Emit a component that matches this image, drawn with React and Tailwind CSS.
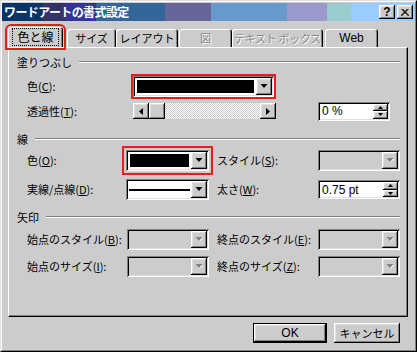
import React from 'react';

const RAISED = 'shadow-[inset_-1px_-1px_#000,inset_1px_1px_#fff,inset_-2px_-2px_#808080,inset_2px_2px_#dfdfdf]';
const SUNKEN = 'shadow-[inset_1px_1px_#808080,inset_-1px_-1px_#fff,inset_2px_2px_#000,inset_-2px_-2px_#dfdfdf]';
const TAB = 'shadow-[inset_1px_1px_#fff,inset_-1px_0_#000,inset_-2px_0_#808080]';

const Down = ({ disabled }) => (
  <svg width="8" height="5" viewBox="0 0 8 5">
    {disabled && <polygon points="1.5,1 8,1 4.75,4.5" fill="#fff" />}
    <polygon points="0.5,0 7.5,0 4,4" fill={disabled ? '#808080' : '#000'} />
  </svg>
);

const DropBtn = ({ disabled }) => (
  <div className={`w-[16px] h-full bg-[#cccccc] flex items-center justify-center ${RAISED}`}>
    <Down disabled={disabled} />
  </div>
);

const Combo = ({ children, disabled, className = '' }) => (
  <div className={`h-[21px] p-[2px] flex ${SUNKEN} ${disabled ? 'bg-[#cccccc]' : 'bg-white'} ${className}`}>
    <div className="flex-1 flex items-center">{children}</div>
    <DropBtn disabled={disabled} />
  </div>
);

const SpinBtn = ({ up }) => (
  <div className={`flex-1 bg-[#cccccc] flex items-center justify-center ${RAISED}`}>
    <svg width="5" height="3" viewBox="0 0 5 3">
      <polygon points={up ? '0,3 5,3 2.5,0' : '0,0 5,0 2.5,3'} fill="#000" />
    </svg>
  </div>
);

const Spin = ({ value, className = '' }) => (
  <div className={`h-[19px] p-[2px] flex bg-white ${SUNKEN} ${className}`}>
    <div className="flex-1 flex items-center pl-[2px] text-[12px] font-['Liberation_Sans',sans-serif]">{value}</div>
    <div className="w-[15px] flex flex-col">
      <SpinBtn up />
      <SpinBtn />
    </div>
  </div>
);

const Section = ({ label, className = '' }) => (
  <div className={`h-[14px] flex items-center pl-[8px] pr-[6px] ${className}`}>
    <span>{label}</span>
    <div className="flex-1 ml-[7px] h-[2px] border-t border-[#808080] border-b border-b-white" />
  </div>
);

const Label = ({ text, k, className = '' }) => (
  <span className={`shrink-0 ${className}`}>
    {text}(<u>{k}</u>):
  </span>
);

const Tab = ({ children, w, disabled, selected, className = '' }) => (
  <div
    className={`${w} ${selected ? 'h-[20px] relative z-10 outline-2 outline-offset-[1px] outline-[#e02020]' : 'h-[18px]'} shrink-0 bg-[#cccccc] rounded-t-[3px] flex items-center justify-center ${TAB} ${disabled ? 'text-[#8a8a8a] [text-shadow:1px_1px_#fff]' : ''} ${className}`}
  >
    {children}
  </div>
);

export default function App() {
  return (
    <div className="w-[417px] h-[352px] bg-[#cccccc] border border-t-[#dfdfdf] border-l-[#dfdfdf] border-r-black border-b-black font-['Noto_Sans_CJK_JP',sans-serif] text-[11px] text-black leading-none whitespace-nowrap select-none">
      <div className="h-full border border-t-white border-l-white border-r-[#808080] border-b-[#808080] flex flex-col pt-[1px]">
        {/* title bar */}
        <div className="h-[18px] relative flex items-center">
          <div className="absolute inset-0 flex">
            <div className="w-[40px] bg-[#0a3366]" />
            <div className="w-[23px] bg-[#333366]" />
            <div className="w-[31px] bg-[#333399]" />
            <div className="w-[69px] bg-[#336699]" />
            <div className="w-[46px] bg-[#666699]" />
            <div className="w-[76px] bg-[#6699cc]" />
            <div className="w-[40px] bg-[#9999cc]" />
            <div className="w-[24px] bg-[#99cccc]" />
            <div className="flex-1 bg-[#99ccff]" />
          </div>
          <span className="relative pl-[2px] text-white font-bold text-[12px] tracking-[-0.6px]">ワードアートの書式設定</span>
          <div className="relative ml-auto flex gap-[2px] pr-[2px]">
            <div className={`w-[16px] h-[14px] bg-[#cccccc] flex items-center justify-center font-bold text-[12px] font-['Liberation_Sans',sans-serif] ${RAISED}`}>?</div>
            <div className={`w-[16px] h-[14px] bg-[#cccccc] flex items-center justify-center ${RAISED}`}>
              <svg width="8" height="7" viewBox="0 0 8 7">
                <path d="M0.5 0 L7.5 7 M1.5 0 L8.5 7 M7.5 0 L0.5 7 M6.5 0 L-0.5 7" stroke="#000" strokeWidth="1" />
              </svg>
            </div>
          </div>
        </div>

        <div className="px-[6px] flex flex-col">
          {/* tabs */}
          <div className="mt-[6px] h-[20px] flex items-end">
            <Tab w="w-[55px]" selected>
              <span className="border border-dotted border-black px-[4px] py-[2px] text-[12px]">色と線</span>
            </Tab>
            <Tab w="w-[49px]" className="ml-[4px]">サイズ</Tab>
            <Tab w="w-[62px]">レイアウト</Tab>
            <Tab w="w-[53px]" className="ml-[1px]" disabled>
              <span className="text-[11px]">図</span>
            </Tab>
            <Tab w="w-[91px]" className="tracking-[-0.3px]" disabled>テキスト ボックス</Tab>
            <Tab w="w-[53px]" className="ml-[2px] text-[12px] font-['Liberation_Sans',sans-serif]">Web</Tab>
          </div>

          {/* panel */}
          <div className="w-[400px] h-[270px] border border-t-white border-l-white border-r-black border-b-black">
            <div className="h-full border-r border-b border-[#808080] flex flex-col pt-[7px]">
              <Section label="塗りつぶし" />

              <div className="mt-[7px] h-[21px] flex items-center pl-[18px]">
                <Label text="色" k="C" className="w-[106px]" />
                <Combo className="w-[141px] outline-2 outline-[#e02020]">
                  <div className="w-full h-full border-2 border-white bg-black" />
                </Combo>
              </div>

              <div className="mt-[6px] h-[16px] flex items-center pl-[18px]">
                <Label text="透過性" k="T" className="w-[106px]" />
                <div className="w-[143px] h-[16px] flex">
                  <div className={`w-[16px] bg-[#cccccc] flex items-center justify-center ${RAISED}`}>
                    <svg width="4" height="7" viewBox="0 0 4 7"><polygon points="4,0 4,7 0,3.5" fill="#000" /></svg>
                  </div>
                  <div className={`w-[16px] bg-[#cccccc] ${RAISED}`} />
                  <div className="flex-1 bg-[image:repeating-conic-gradient(#ffffff_0%_25%,#cccccc_0%_50%)] bg-[length:2px_2px]" />
                  <div className={`w-[16px] bg-[#cccccc] flex items-center justify-center ${RAISED}`}>
                    <svg width="4" height="7" viewBox="0 0 4 7"><polygon points="0,0 0,7 4,3.5" fill="#000" /></svg>
                  </div>
                </div>
                <Spin value="0 %" className="ml-[42px] w-[72px]" />
              </div>

              <Section label="線" className="mt-[13px]" />

              <div className="mt-[4px] h-[21px] flex items-center pl-[18px]">
                <Label text="色" k="O" className="w-[99px]" />
                <Combo className="w-[83px] outline-2 outline-offset-[2px] outline-[#e02020]">
                  <div className="w-full h-full border-2 border-white bg-black" />
                </Combo>
                <Label text="スタイル" k="S" className="ml-[8px] w-[101px]" />
                <Combo disabled className="w-[82px] h-[20px]" />
              </div>

              <div className="mt-[8px] h-[21px] flex items-center pl-[18px]">
                <Label text="実線/点線" k="D" className="w-[99px]" />
                <Combo className="w-[83px]">
                  <div className="w-full h-[2px] bg-black mx-[1px]" />
                </Combo>
                <Label text="太さ" k="W" className="ml-[8px] w-[101px]" />
                <Spin value="0.75 pt" className="w-[82px]" />
              </div>

              <Section label="矢印" className="mt-[10px]" />

              <div className="mt-[5px] h-[21px] flex items-center pl-[18px]">
                <Label text="始点のスタイル" k="B" className="w-[100px]" />
                <Combo disabled className="w-[82px]" />
                <Label text="終点のスタイル" k="E" className="ml-[8px] w-[101px]" />
                <Combo disabled className="w-[82px]" />
              </div>

              <div className="mt-[6px] h-[21px] flex items-center pl-[18px]">
                <Label text="始点のサイズ" k="I" className="w-[100px]" />
                <Combo disabled className="w-[82px]" />
                <Label text="終点のサイズ" k="Z" className="ml-[8px] w-[101px]" />
                <Combo disabled className="w-[82px]" />
              </div>
            </div>
          </div>

          {/* buttons */}
          <div className="mt-[6px] flex justify-end gap-[7px] pr-[9px]">
            <div className="w-[74px] h-[20px] border border-black">
              <div className={`h-full bg-[#cccccc] flex items-center justify-center text-[12px] font-['Liberation_Sans',sans-serif] ${RAISED}`}>OK</div>
            </div>
            <div className={`w-[66px] h-[20px] bg-[#cccccc] flex items-center justify-center ${RAISED}`}>キャンセル</div>
          </div>
        </div>
      </div>
    </div>
  );
}
